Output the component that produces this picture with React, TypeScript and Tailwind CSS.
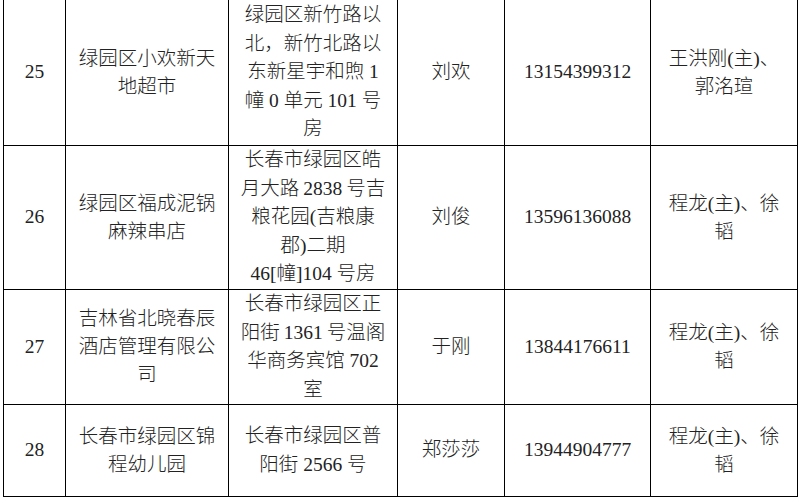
import React from "react";

type Row = {
  h: string;
  no: string;
  name: string[];
  addr: string[];
  person: string;
  phone: string;
  staff: string[];
};

const rows: Row[] = [
  {
    h: "h-[146px]",
    no: "25",
    name: ["绿园区小欢新天", "地超市"],
    addr: ["绿园区新竹路以", "北，新竹北路以", "东新星宇和煦 1", "幢 0 单元 101 号", "房"],
    person: "刘欢",
    phone: "13154399312",
    staff: ["王洪刚(主)、", "郭洺瑄"],
  },
  {
    h: "h-[144px]",
    no: "26",
    name: ["绿园区福成泥锅", "麻辣串店"],
    addr: ["长春市绿园区皓", "月大路\u20092838\u2009号吉", "粮花园(吉粮康", "郡)二期", "46[幢]104 号房"],
    person: "刘俊",
    phone: "13596136088",
    staff: ["程龙(主)、徐", "韬"],
  },
  {
    h: "h-[115px]",
    no: "27",
    name: ["吉林省北晓春辰", "酒店管理有限公", "司"],
    addr: ["长春市绿园区正", "阳街\u20091361\u2009号温阁", "华商务宾馆 702", "室"],
    person: "于刚",
    phone: "13844176611",
    staff: ["程龙(主)、徐", "韬"],
  },
  {
    h: "h-[92px]",
    no: "28",
    name: ["长春市绿园区锦", "程幼儿园"],
    addr: ["长春市绿园区普", "阳街 2566 号"],
    person: "郑莎莎",
    phone: "13944904777",
    staff: ["程龙(主)、徐", "韬"],
  },
];

function Cell({ lines, lh = "leading-[28.5px]" }: { lines: string[]; lh?: string }) {
  return (
    <div className="flex items-center justify-center border-r border-black text-center">
      <div className={lh}>
        {lines.map((l, i) => (
          <div key={i} className="whitespace-nowrap">
            {l}
          </div>
        ))}
      </div>
    </div>
  );
}

export default function App() {
  return (
    <div
      className="w-[800px] h-[502px] bg-white overflow-hidden text-[19.5px] font-light text-[#222222]"
      style={{ fontFamily: '"Liberation Serif", "Noto Sans CJK SC", serif' }}
    >
      <div className="ml-[3px] w-[795px] border-l border-black">
        {rows.map((r) => (
          <div
            key={r.no}
            className={`grid grid-cols-[62px_163px_169px_107px_146px_147px] border-b border-black ${r.h}`}
          >
            <Cell lines={[r.no]} />
            <Cell lines={r.name} lh="leading-[28px]" />
            <Cell lines={r.addr} />
            <Cell lines={[r.person]} />
            <Cell lines={[r.phone]} />
            <Cell lines={r.staff} lh="leading-[28px]" />
          </div>
        ))}
      </div>
    </div>
  );
}
